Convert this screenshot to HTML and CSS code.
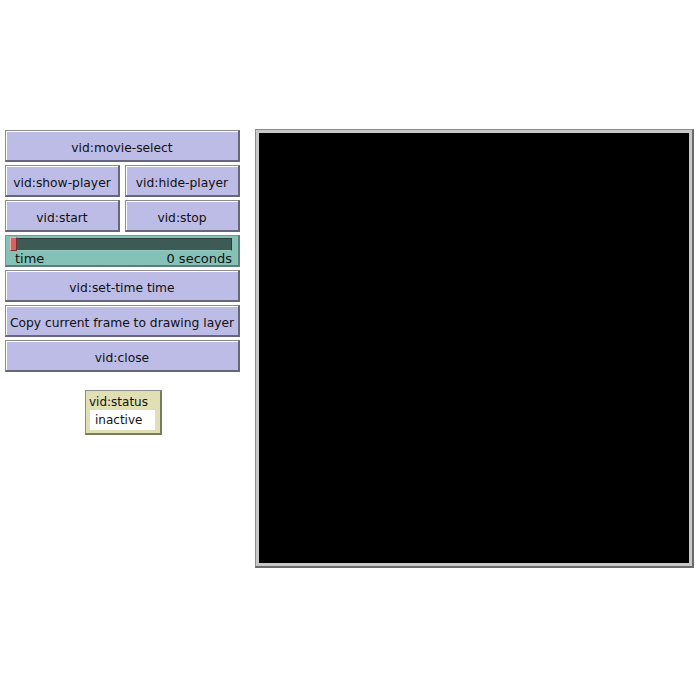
FILE: index.html
```html
<!DOCTYPE html>
<html lang="en">
<head>
    <meta charset="UTF-8">
    <title>Video Extension Demo</title>
    <link rel="stylesheet" href="styles.css">
</head>
<body>
    <div class="interface">
        <div class="controls">
            <div class="button wide">vid:movie-select</div>
            <div class="pair">
                <div class="button">vid:show-player</div>
                <div class="button">vid:hide-player</div>
            </div>
            <div class="pair">
                <div class="button">vid:start</div>
                <div class="button">vid:stop</div>
            </div>
            <div class="slider">
                <div class="track">
                    <div class="thumb"></div>
                </div>
                <div class="sliderText">
                    <span>time</span>
                    <span>0 seconds</span>
                </div>
            </div>
            <div class="button wide">vid:set-time time</div>
            <div class="button wide">Copy current frame to drawing layer</div>
            <div class="button wide">vid:close</div>
            <div class="monitor">
                <div class="monitorLabel">vid:status</div>
                <div class="monitorValue">inactive</div>
            </div>
        </div>
        <div class="view">
            <div class="world"></div>
        </div>
    </div>
</body>
</html>
```

FILE: styles.css
```css
body {
    margin: 0;
    padding: 0;
    background: #fff;
    font-family: "DejaVu Sans", sans-serif;
    font-size: 12.3px;
    color: #111;
}

.interface {
    display: flex;
    align-items: flex-start;
    padding-top: 129px;
    padding-left: 5px;
}

.controls {
    width: 235px;
    display: flex;
    flex-direction: column;
    gap: 3px;
    margin-top: 1px;
}

.pair {
    display: flex;
    justify-content: space-between;
}

.pair .button {
    width: 115px;
}

.button {
    box-sizing: border-box;
    height: 32px;
    padding-top: 5px;
    display: flex;
    align-items: center;
    justify-content: center;
    background: #bcbce6;
    border-top: 1px solid #8c8c8c;
    border-left: 1px solid #8c8c8c;
    border-right: 2px solid #66667e;
    border-bottom: 2px solid #66667e;
    box-shadow: inset 1px 1px 0 #fff;
    white-space: nowrap;
}

.slider {
    box-sizing: border-box;
    height: 32px;
    background: #84c2b8;
    border-top: 1px solid #8c8c8c;
    border-left: 1px solid #8c8c8c;
    border-right: 2px solid #5d7d78;
    border-bottom: 2px solid #5d7d78;
    padding: 2px 6px 0 4px;
}

.track {
    position: relative;
    height: 11px;
    margin-left: 1px;
    background: #3d5a55;
    border: 1px solid #2a3d3a;
    border-bottom-color: #9ac9c1;
}

.thumb {
    position: absolute;
    left: -2px;
    top: -2px;
    width: 5px;
    height: 12px;
    background: #d46464;
    border: 1px solid #7a3030;
    border-top-color: #f0b0b0;
    border-left-color: #f0b0b0;
}

.sliderText {
    display: flex;
    justify-content: space-between;
    padding-left: 5px;
    line-height: 15px;
    font-size: 13px;
}

.monitor {
    box-sizing: border-box;
    width: 77px;
    height: 45px;
    margin-top: 15px;
    margin-left: 80px;
    background: #e0e0b4;
    border-top: 1px solid #8c8c8c;
    border-left: 1px solid #8c8c8c;
    border-right: 2px solid #7a7a5e;
    border-bottom: 2px solid #7a7a5e;
    padding: 4px 5px 0 3px;
}

.monitorLabel {
    font-size: 12px;
    line-height: 14px;
}

.monitorValue {
    background: #fff;
    margin-top: 1px;
    margin-left: 1px;
    height: 20px;
    line-height: 20px;
    padding-left: 5px;
    font-size: 12px;
}

.view {
    margin-left: 15px;
    border-top: 1px solid #8c8c8c;
    border-left: 1px solid #8c8c8c;
    border-right: 2px solid #6c6c6c;
    border-bottom: 2px solid #6c6c6c;
    padding: 3px;
    background: #c8c8c8;
}

.world {
    width: 430px;
    height: 430px;
    background: #000;
}
```
